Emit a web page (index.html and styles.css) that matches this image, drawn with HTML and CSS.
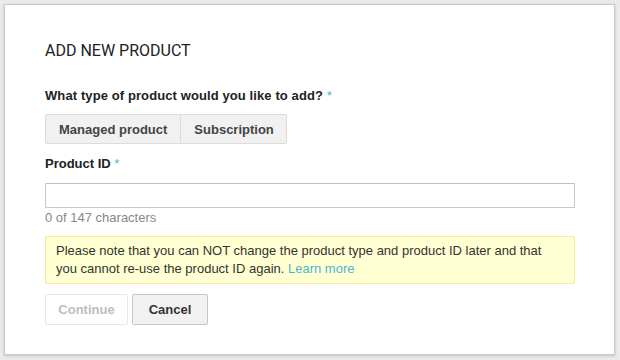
FILE: index.html
```html
<!DOCTYPE html>
<html>
<head>
<meta charset="utf-8">
<link rel="stylesheet" href="styles.css">
</head>
<body>
<div class="dialog">
  <h1 class="title">ADD NEW PRODUCT</h1>
  <div class="label label-type">What type of product would you like to add? <span class="req">*</span></div>
  <div class="seg">
    <button class="seg-btn">Managed product</button>
    <button class="seg-btn seg-last">Subscription</button>
  </div>
  <div class="label label-id">Product ID <span class="req">*</span></div>
  <input class="field" type="text">
  <div class="counter">0 of 147 characters</div>
  <div class="notice">Please note that you can NOT change the product type and product ID later and that you cannot re-use the product ID again. <a class="link">Learn more</a></div>
  <div class="actions">
    <button class="btn btn-disabled">Continue</button>
    <button class="btn btn-cancel">Cancel</button>
  </div>
</div>
</body>
</html>
```
FILE: styles.css
```css
html, body {
  margin: 0;
  padding: 0;
}
body {
  background: #ebebeb;
  width: 620px;
  height: 360px;
  padding: 4px 0 0 4px;
  box-sizing: border-box;
  font-family: "Liberation Sans", Arial, sans-serif;
  overflow: hidden;
}
.dialog {
  width: 611px;
  height: 351px;
  box-sizing: border-box;
  background: #fff;
  border: 1px solid #c9c9c9;
  box-shadow: 0 1px 3px rgba(0,0,0,0.18);
  padding: 36px 40px 0 40px;
}
.title {
  margin: 0;
  font-family: Roboto, "Liberation Sans", sans-serif;
  font-weight: 400;
  font-size: 16px;
  line-height: 20px;
  color: #222;
}
.label {
  font-size: 13px;
  line-height: 16px;
  font-weight: bold;
  color: #222;
}
.label-type {
  margin-top: 27px;
  letter-spacing: 0.1px;
}
.label-id {
  margin-top: 12px;
}
.req {
  color: #4db6d2;
  font-weight: normal;
}
.seg {
  display: flex;
  margin-top: 10px;
}
.seg-btn {
  height: 30px;
  padding: 0 13px;
  font-family: "Liberation Sans", Arial, sans-serif;
  font-size: 13px;
  font-weight: bold;
  color: #444;
  background: #f1f1f1;
  border: 1px solid #dcdcdc;
  border-radius: 2px 0 0 2px;
  margin: 0;
}
.seg-last {
  border-left: none;
  border-radius: 0 2px 2px 0;
  padding: 0 12px 0 13px;
}
.field {
  display: block;
  margin-top: 11px;
  width: 530px;
  height: 25px;
  box-sizing: border-box;
  border: 1px solid #c8c8c8;
  border-top-color: #c0c0c0;
  border-radius: 1px;
  padding: 0 8px;
  background: #fff;
}
.counter {
  margin-top: 2px;
  font-size: 13px;
  line-height: 15px;
  color: #888;
}
.notice {
  margin-top: 11px;
  width: 530px;
  box-sizing: border-box;
  background: #ffffd2;
  border: 1px solid #f4e9a0;
  border-radius: 2px;
  padding: 5px 10px 5px 10px;
  font-size: 13px;
  line-height: 18px;
  color: #333;
}
.link {
  color: #4db6d2;
  text-decoration: none;
}
.actions {
  display: flex;
  gap: 4px;
  margin-top: 10px;
}
.btn {
  height: 31px;
  padding: 0 12px;
  font-family: "Liberation Sans", Arial, sans-serif;
  font-size: 13px;
  font-weight: bold;
  border-radius: 2px;
  margin: 0;
}
.btn-disabled {
  width: 83px;
  background: #fff;
  color: #bdbdbd;
  border: 1px solid #e8e8e8;
}
.btn-cancel {
  width: 76px;
  background: #f1f1f1;
  color: #333;
  border: 1px solid #c6c6c6;
}
```
